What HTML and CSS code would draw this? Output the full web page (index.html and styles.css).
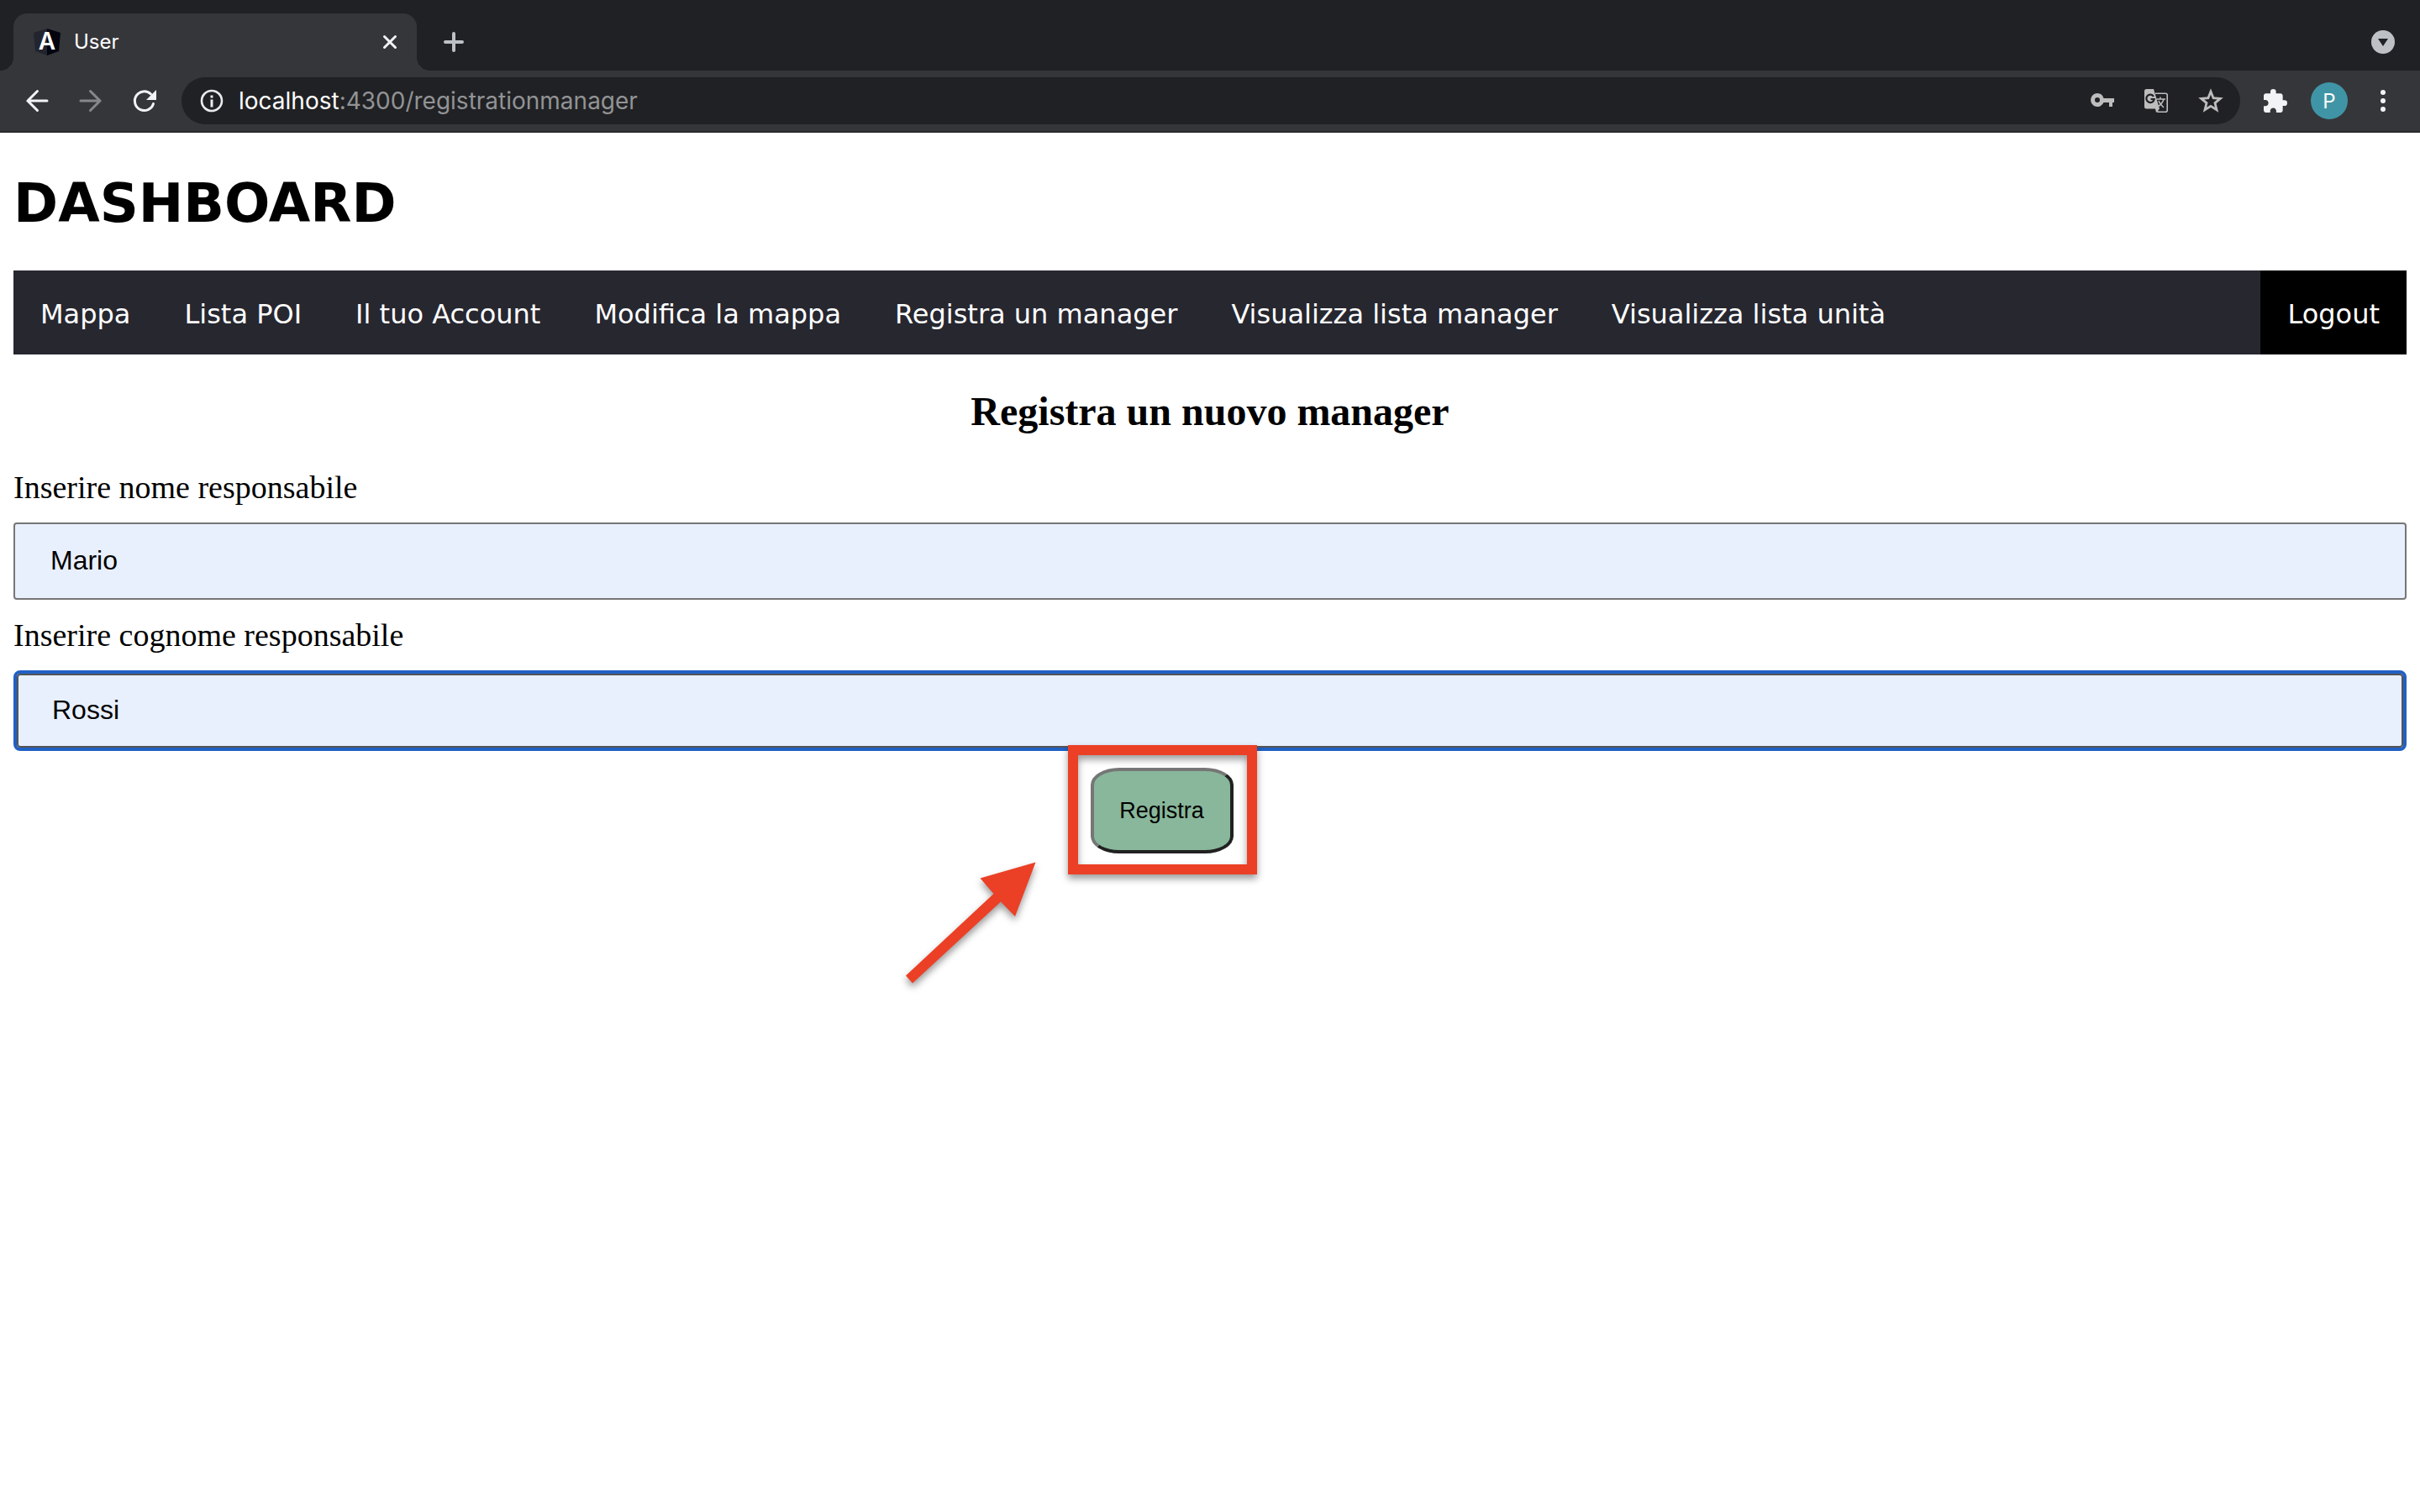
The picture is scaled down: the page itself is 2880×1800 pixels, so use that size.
FILE: index.html
```html
<!DOCTYPE html>
<html lang="it">
<head>
<meta charset="utf-8">
<meta name="viewport" content="width=device-width, initial-scale=1">
<title>User</title>
<link rel="stylesheet" href="styles.css">
</head>
<body>
<header class="browser">
  <div class="tab-strip">
    <div class="tab">
      <svg class="favicon" viewBox="0 0 32 32" aria-hidden="true">
        <path fill="#23252e" d="M16 0 0 5l2 22 14 5z"/>
        <path fill="#02050f" d="M16 0l16 5-2 22-14 5z"/>
        <text class="favicon-letter" x="16" y="25" text-anchor="middle">A</text>
      </svg>
      <span class="tab-title">User</span>
      <button class="icon-button tab-close" aria-label="Chiudi scheda">
        <svg width="16" height="16" viewBox="0 0 16 16"><path class="line" d="M1.5 1.5l13 13m0-13l-13 13"/></svg>
      </button>
    </div>
    <button class="icon-button new-tab" aria-label="Nuova scheda">
      <svg width="24" height="24" viewBox="0 0 24 24"><path class="line line-plus" d="M12 2v20M2 12h20"/></svg>
    </button>
    <button class="icon-button tab-search" aria-label="Cerca schede">
      <svg width="28" height="28" viewBox="0 0 28 28"><circle cx="14" cy="14" r="14" fill="#bdc1c6"/><path fill="#202124" d="M8 10h12l-6 9z"/></svg>
    </button>
  </div>
  <div class="toolbar">
    <div class="history">
      <button class="icon-button" aria-label="Indietro">
        <svg width="28" height="28" viewBox="0 0 28 28"><path class="line" d="M26 14H3M14.500 2.500L3 14l11.500 11.500"/></svg>
      </button>
      <button class="icon-button is-disabled" aria-label="Avanti" disabled>
        <svg width="28" height="28" viewBox="0 0 28 28"><path class="line" d="M2 14h23M13.500 2.500L25 14l-11.500 11.500"/></svg>
      </button>
      <button class="icon-button" aria-label="Ricarica">
        <svg width="28" height="28" viewBox="0 0 28 28"><path class="line" d="M24.500 17.500A11.300 11.300 0 1 1 21.500 6"/><path fill="#f1f3f4" d="M28 1v12H16z"/></svg>
      </button>
    </div>
    <div class="omnibox">
      <svg width="28" height="28" viewBox="0 0 28 28" aria-hidden="true"><circle cx="14" cy="14" r="12" fill="none" stroke="#e8eaed" stroke-width="2.600"/><path fill="#e8eaed" d="M12.500 7.500h3v3h-3zM12.500 12.500h3v9h-3z"/></svg>
      <div class="address" role="textbox" aria-label="Indirizzo"><span class="host">localhost</span>:4300/registrationmanager</div>
      <div class="omnibox-actions">
        <button class="icon-button" aria-label="Password">
          <svg width="28" height="28" viewBox="0 0 28 28"><path fill="#bdbdbd" fill-rule="evenodd" d="M8 5a8 8 0 1 0 7.500 11H22v5h4v-5h2v-5H15.500A8 8 0 0 0 8 5zm0 5a3 3 0 1 1 0 6 3 3 0 0 1 0-6z"/></svg>
        </button>
        <button class="icon-button" aria-label="Traduci">
          <svg width="28" height="28" viewBox="0 0 28 28"><path fill="none" stroke="#bdbdbd" stroke-width="1.600" d="M13 5.200h12.200a2 2 0 0 1 2 2v18a2 2 0 0 1-2 2H16l-2-5"/><path fill="#bdbdbd" d="M2.500 0H11l7 23.500H2.500A2.500 2.500 0 0 1 0 21V2.500A2.500 2.500 0 0 1 2.500 0zM13 23.500h5l-4 4.500z"/><path fill="none" stroke="#bdbdbd" stroke-width="1.500" d="M14.500 12H25M19 9.500V12M23 12c-1 4-4 7-7 9m1-7c1 3 3 5 6 8"/><path fill="none" stroke="#202124" stroke-width="2.200" d="M11 8.800A4.700 4.700 0 1 0 11.700 12H7.500"/></svg>
        </button>
        <button class="icon-button" aria-label="Aggiungi ai preferiti">
          <svg width="30" height="30" viewBox="0 0 30 30"><path fill="none" stroke="#bdbdbd" stroke-width="2.800" d="M15 4l3.100 7.700 8.200.600-6.300 5.300 2 8.100-7-4.400-7 4.400 2-8.100-6.300-5.300 8.200-.600z"/></svg>
        </button>
      </div>
    </div>
    <button class="icon-button" aria-label="Estensioni">
      <svg width="28" height="28" viewBox="2 1 21 21"><path fill="#f1f3f4" d="M20.500 11H19V7c0-1.100-.9-2-2-2h-4V3.500a2.500 2.500 0 0 0-5 0V5H4c-1.100 0-1.990.9-1.990 2v3.800H3.500c1.490 0 2.700 1.210 2.700 2.700s-1.210 2.700-2.700 2.700H2V20c0 1.100.9 2 2 2h3.800v-1.500c0-1.490 1.210-2.700 2.700-2.700s2.700 1.210 2.700 2.700V22H17c1.100 0 2-.9 2-2v-4h1.500a2.500 2.500 0 0 0 0-5z"/></svg>
    </button>
    <button class="avatar" aria-label="Profilo P">P</button>
    <button class="icon-button" aria-label="Menu">
      <svg width="28" height="28" viewBox="0 0 28 28" fill="#f1f3f4"><circle cx="14" cy="4" r="3"/><circle cx="14" cy="14" r="3"/><circle cx="14" cy="24" r="3"/></svg>
    </button>
  </div>
</header>

<main class="page">
  <h1 class="page-title">DASHBOARD</h1>
  <nav class="navbar">
    <a class="nav-link" href="#mappa">Mappa</a>
    <a class="nav-link" href="#poi">Lista POI</a>
    <a class="nav-link" href="#account">Il tuo Account</a>
    <a class="nav-link" href="#modifica">Modifica la mappa</a>
    <a class="nav-link" href="#registra">Registra un manager</a>
    <a class="nav-link" href="#manager">Visualizza lista manager</a>
    <a class="nav-link" href="#unita">Visualizza lista unità</a>
    <a class="nav-link nav-logout" href="#logout">Logout</a>
  </nav>
  <h2 class="form-title">Registra un nuovo manager</h2>
  <form class="form">
    <label class="label" for="nome">Inserire nome responsabile</label>
    <input class="field" id="nome" type="text" value="Mario">
    <label class="label" for="cognome">Inserire cognome responsabile</label>
    <input class="field is-focused" id="cognome" type="text" value="Rossi">
    <div class="submit">
      <button class="submit-button" type="button">Registra</button>
      <div class="highlight"></div>
      <svg class="pointer" width="160" height="160" viewBox="0 0 160 160" aria-hidden="true"><path fill="#eb4026" d="M154.500 6.500l-66 19L104.500 44 0 141.500l8 9 105-97 17 17.500z"/></svg>
    </div>
  </form>
</main>
</body>
</html>
```
FILE: styles.css
```css
* {
  box-sizing: border-box;
}

body {
  min-height: 100vh;
  margin: 0;
  background: #fff;
  color: #000;
  font-family: "Liberation Serif", "Times New Roman", serif;
}

button {
  font-family: inherit;
}

svg {
  display: block;
  overflow: visible;
}

/* Browser window */
.browser {
  background: #35363a;
  border-bottom: 2px solid #28292c;
  color: #fff;
  font-family: Inter, Roboto, sans-serif;
}

.icon-button {
  display: flex;
  padding: 0;
  border: 0;
  background: none;
}

.line {
  fill: none;
  stroke: #f1f3f4;
  stroke-width: 3;
  stroke-linecap: round;
}

.line-plus {
  stroke: #bdc1c6;
  stroke-width: 4;
}

.is-disabled .line {
  stroke: #868789;
}

.tab-strip {
  display: flex;
  align-items: center;
  height: 84px;
  padding: 16px 30px 0 16px;
  background: #202124;
}

.tab {
  position: relative;
  display: flex;
  align-items: center;
  gap: 16px;
  width: 480px;
  height: 68px;
  padding: 0 24px;
  border-radius: 16px 16px 0 0;
  background: #35363a;
}

.tab::before,
.tab::after {
  content: "";
  position: absolute;
  bottom: 0;
  width: 16px;
  height: 16px;
}

.tab::before {
  right: 100%;
  background: radial-gradient(circle at 0 0, #202124 16px, #35363a 16px);
}

.tab::after {
  left: 100%;
  background: radial-gradient(circle at 100% 0, #202124 16px, #35363a 16px);
}

.favicon {
  width: 32px;
  height: 32px;
}

.favicon-letter {
  fill: #fff;
  font-family: Inter, sans-serif;
  font-size: 28px;
  font-weight: 600;
}

.tab-title {
  font-size: 24px;
  line-height: 32px;
}

.tab-close {
  margin-left: auto;
}

.new-tab {
  margin-left: 32px;
}

.tab-search {
  margin-left: auto;
}

.toolbar {
  display: flex;
  align-items: center;
  gap: 28px;
  height: 72px;
  padding: 0 30px;
}

.history {
  display: flex;
  gap: 36px;
  padding-right: 2px;
}

.omnibox {
  display: flex;
  flex: 1;
  align-items: center;
  gap: 18px;
  height: 56px;
  padding: 0 20px 0 22px;
  border-radius: 28px;
  background: #202124;
}

.address {
  color: #929395;
  font-size: 28px;
  line-height: 36px;
}

.host {
  color: #fff;
}

.omnibox-actions {
  display: flex;
  gap: 36px;
  align-items: center;
  margin-left: auto;
}

.avatar {
  width: 44px;
  height: 44px;
  padding: 0;
  border: 0;
  border-radius: 50%;
  background: #3f95a5;
  color: #fff;
  font-size: 24px;
}

/* Page */
.page {
  padding: 44px 16px 200px;
}

.page-title {
  margin: 0 0 40px;
  font-family: Verdana, "DejaVu Sans", sans-serif;
  font-size: 64px;
  line-height: 80px;
}

.navbar {
  display: flex;
  background: #272730;
  font-family: Verdana, "DejaVu Sans", sans-serif;
  font-size: 32px;
  line-height: 40px;
}

.nav-link {
  padding: 32px 32px 28px;
  color: #fff;
  text-decoration: none;
  white-space: nowrap;
}

.nav-logout {
  margin-left: auto;
  background: #000;
}

.form-title {
  margin: 40px 0;
  font-size: 48px;
  line-height: 56px;
  text-align: center;
}

.form {
  display: flex;
  flex-direction: column;
  gap: 20px;
}

.label {
  font-size: 38px;
  line-height: 44px;
}

.field {
  width: 100%;
  height: 92px;
  padding: 0 42px 2px;
  border: 2px solid #767676;
  border-radius: 4px;
  outline: 0;
  background: #e8effd;
  color: #000;
  font-family: "Liberation Sans", Arial, sans-serif;
  font-size: 32px;
}

.field.is-focused {
  height: 96px;
  border: 4px solid #2160c4;
  border-radius: 8px;
  box-shadow: inset 0 0 0 2px #555;
}

.submit {
  position: relative;
  align-self: flex-start;
  margin-left: 45%;
}

.submit-button {
  display: block;
  width: 170px;
  height: 102px;
  padding: 0;
  border: 4px solid;
  border-color: #767676 #212121 #212121 #767676;
  border-radius: 20%;
  background: #88b79b;
  color: #000;
  font-family: "Liberation Sans", Arial, sans-serif;
  font-size: 27px;
}

/* Callout drawn over the button */
.highlight {
  position: absolute;
  inset: -27px -28px -25px -27px;
  border: 12px solid #eb4026;
  pointer-events: none;
  filter: drop-shadow(0 5px 4px rgba(0, 0, 0, 0.4));
}

.pointer {
  position: absolute;
  top: 106px;
  right: 230px;
  pointer-events: none;
  filter: drop-shadow(0 5px 4px rgba(0, 0, 0, 0.4));
}
```
